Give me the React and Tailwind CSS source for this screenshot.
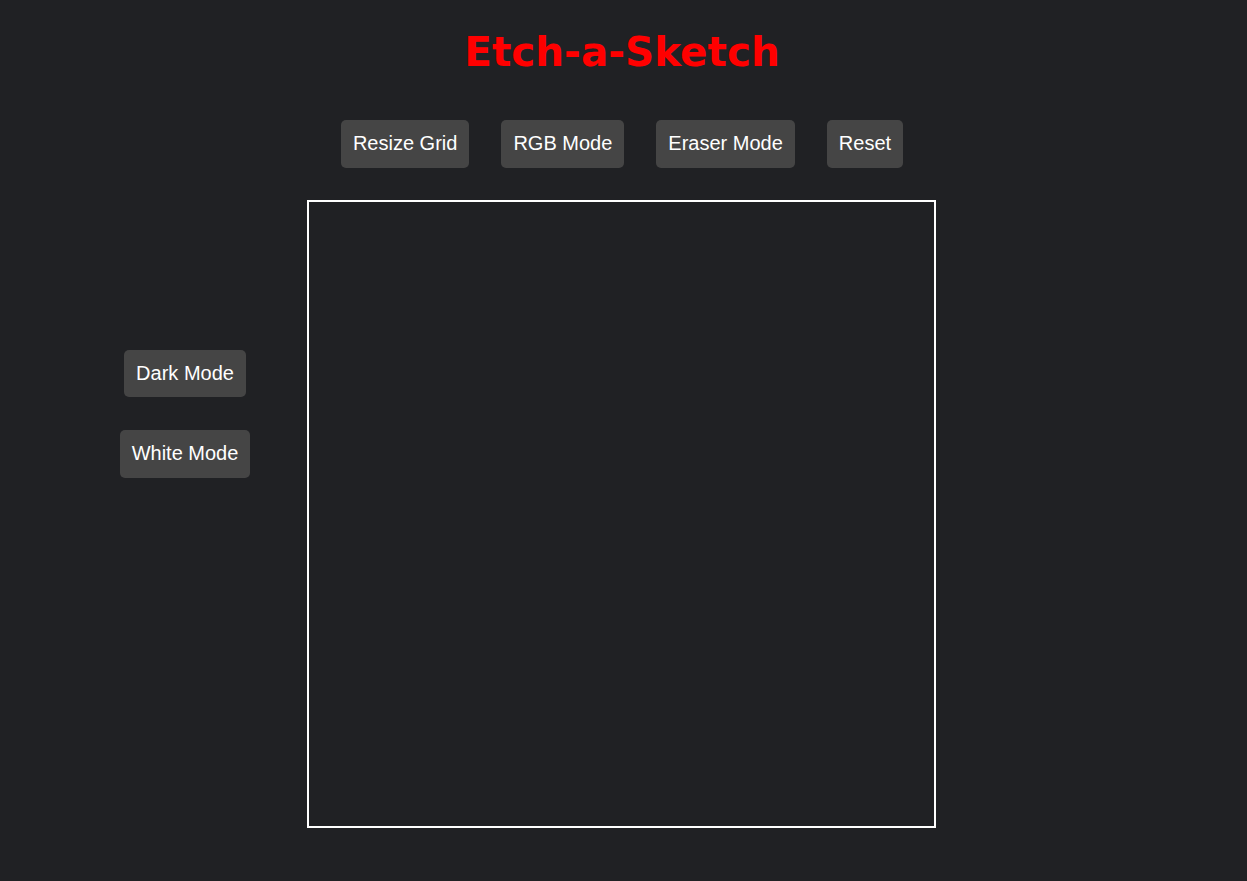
export default function App() {
  const btn =
    "bg-[#454545] text-white rounded-[5px] px-3 py-3 text-[20px] leading-[23.5px] font-['Liberation_Sans',Arial,sans-serif]";
  return (
    <div className="min-h-[881px] w-full bg-[#202124] font-['Liberation_Sans',Arial,sans-serif]">
      <div className="flex flex-col items-center pr-[3px]">
        <h1 className="mt-[29px] text-[40.5px] leading-[46px] font-bold text-[#ff0000] font-['DejaVu_Sans',Verdana,sans-serif]">
          Etch-a-Sketch
        </h1>
        <div className="mt-[45px] flex gap-[32px]">
          <button className={btn}>Resize Grid</button>
          <button className={btn}>RGB Mode</button>
          <button className={btn}>Eraser Mode</button>
          <button className={btn}>Reset</button>
        </div>
        <div className="mt-[32px] flex w-full justify-center">
          <div className="w-[244px] flex flex-col items-center pt-[150px] gap-[33px]">
            <button className={btn}>Dark Mode</button>
            <button className={btn}>White Mode</button>
          </div>
          <div className="w-[629px] h-[628px] border-2 border-white box-border" />
          <div className="w-[245px]" />
        </div>
      </div>
    </div>
  );
}
